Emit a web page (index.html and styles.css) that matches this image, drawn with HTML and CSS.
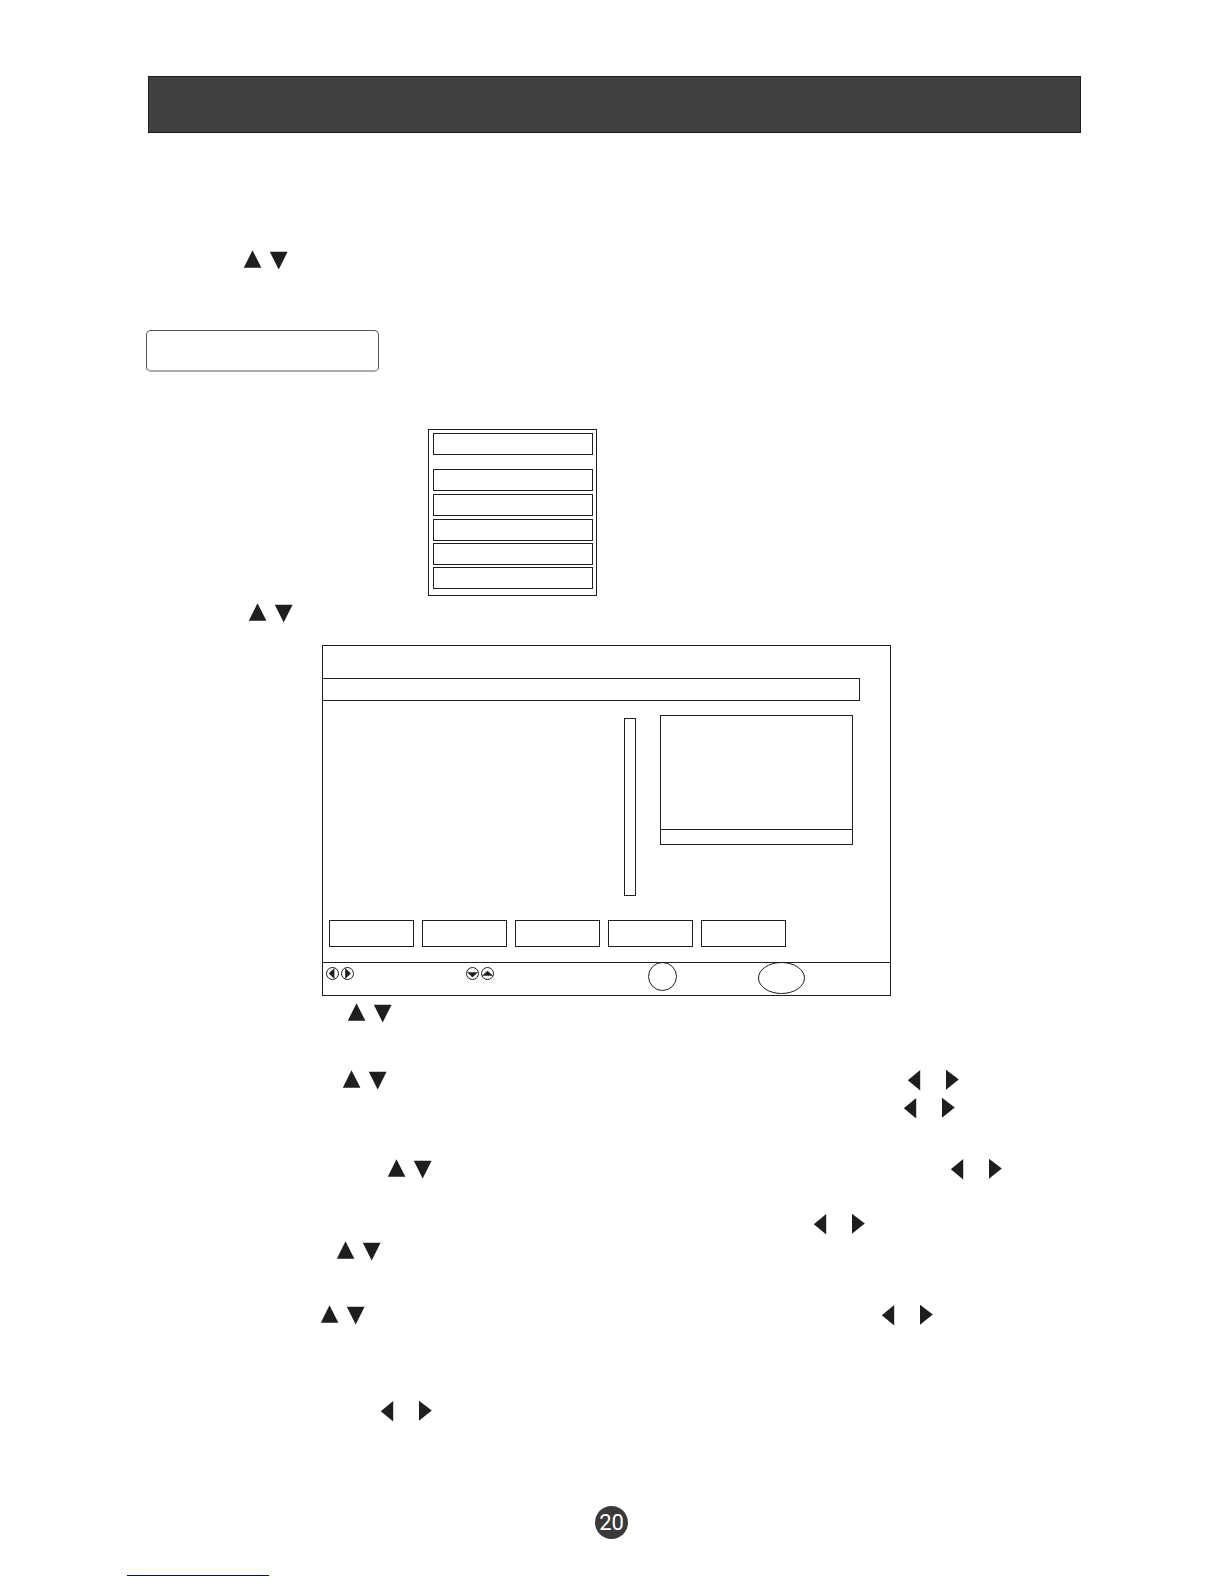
FILE: index.html
```html
<!DOCTYPE html>
<html lang="en">
<head>
<meta charset="utf-8">
<title>20</title>
<link rel="stylesheet" href="styles.css">
</head>
<body>
    <!-- shared arrow shapes -->
    <svg class="defs">
        <symbol id="updown" viewBox="0 0 44 20">
            <path d="M8.5 0.2L17.4 17.8H-0.2z M25.8 1.8H43.6L34.7 19.4z" />
        </symbol>
        <symbol id="leftright" viewBox="0 0 51 20">
            <path d="M-0.2 10.2L12.2 0V20.4z M38 -0.2V19.8L50.8 9.6z" />
        </symbol>
    </svg>
    <main class="page">
        <header class="banner"></header>

        <div class="line line-intro"><svg class="updown"><use href="#updown" /></svg></div>

        <div class="section-title"></div>

        <ul class="menu">
            <li class="menu-head"></li>
            <li></li>
            <li></li>
            <li></li>
            <li></li>
            <li></li>
        </ul>

        <div class="line line-select"><svg class="updown"><use href="#updown" /></svg></div>

        <section class="screen">
            <div class="screen-bar"></div>
            <div class="screen-body">
                <div class="list"></div>
                <div class="scrollbar"></div>
                <div class="preview">
                    <div class="preview-caption"></div>
                </div>
            </div>
            <div class="actions">
                <button type="button"></button>
                <button type="button"></button>
                <button type="button"></button>
                <button type="button"></button>
                <button type="button"></button>
            </div>
            <footer class="keys">
                <div class="key-pair">
                    <svg class="key" viewBox="0 0 13 13"><circle cx="6.5" cy="6.5" r="6" /><path d="M2.8 6.5L8.4 1V12z" /></svg>
                    <svg class="key" viewBox="0 0 13 13"><circle cx="6.5" cy="6.5" r="6" /><path d="M4.2 1V12L9.8 6.5z" /></svg>
                </div>
                <div class="key-pair key-pair-vertical">
                    <svg class="key" viewBox="0 0 13 13"><circle cx="6.5" cy="6.5" r="6" /><path d="M0.9 5.2H12.1L6.5 10.2z" /></svg>
                    <svg class="key" viewBox="0 0 13 13"><circle cx="6.5" cy="6.5" r="6" /><path d="M0.9 8.8H12.1L6.5 3.8z" /></svg>
                </div>
                <svg class="key-ok" viewBox="0 0 29 30"><circle cx="14.5" cy="14.5" r="14" /></svg>
                <svg class="key-exit" viewBox="0 0 47 32"><ellipse cx="23.5" cy="16" rx="23" ry="15.5" /></svg>
            </footer>
        </section>

        <div class="line line-a"><svg class="updown"><use href="#updown" /></svg></div>
        <div class="line line-b"><svg class="updown"><use href="#updown" /></svg><svg class="leftright"><use href="#leftright" /></svg></div>
        <div class="line line-c"><svg class="leftright"><use href="#leftright" /></svg></div>
        <div class="line line-d"><svg class="updown"><use href="#updown" /></svg><svg class="leftright"><use href="#leftright" /></svg></div>
        <div class="line line-e"><svg class="leftright"><use href="#leftright" /></svg></div>
        <div class="line line-f"><svg class="updown"><use href="#updown" /></svg></div>
        <div class="line line-g"><svg class="updown"><use href="#updown" /></svg><svg class="leftright"><use href="#leftright" /></svg></div>
        <div class="line line-h"><svg class="leftright"><use href="#leftright" /></svg></div>

        <div class="page-number">20</div>
    </main>
    <a class="source-link" href="#"></a>
</body>
</html>
```

FILE: styles.css
```css
* {
    box-sizing: border-box;
}
body {
    margin: 0;
    background: #fff;
    color: #231f20;
    font-family: "Liberation Sans", Arial, sans-serif;
}
.defs {
    display: block;
    width: 0;
    height: 0;
}
.page {
    padding: 76px 143px 0 148px;
}
.banner {
    height: 57px;
    background: #404040;
    border: 1px solid #1c1c1c;
}

/* instruction lines */
.line {
    display: flex;
    height: 20px;
}
.line svg,
.line use,
symbol {
    overflow: visible;
}
.line svg {
    flex: none;
    height: 20px;
    fill: #1f1d1e;
}
.updown {
    width: 44px;
}
.leftright {
    width: 51px;
}
.line-intro {
    margin: 117px 0 60px 96px;
}
.line-select {
    margin: 7px 0 22px 101px;
}
.line-a {
    margin: 7px 0 47px 200px;
}
.line-b {
    margin: 0 0 8px 195px;
    gap: 521px;
}
.line-c {
    margin: 0 0 41px 756px;
}
.line-d {
    margin: 0 0 35px 240px;
    gap: 519px;
}
.line-e {
    margin: 0 0 7px 666px;
}
.line-f {
    margin: 0 0 44px 189px;
}
.line-g {
    margin: 0 0 76px 173px;
    gap: 517px;
}
.line-h {
    margin: 0 0 85px 233px;
}

.section-title {
    width: 233px;
    height: 42px;
    margin-left: -2px;
    border: 1px solid #555;
    border-bottom: 2px solid #aaa;
    border-radius: 5px;
}

/* menu */
.menu {
    width: 169px;
    margin: 57px 0 0 280px;
    padding: 3px 3px 6px 4px;
    border: 1px solid #1f1d1e;
    list-style: none;
    display: flex;
    flex-direction: column;
    gap: 2px;
}
.menu li {
    height: 22px;
    border: 1px solid #1f1d1e;
}
.menu li:nth-child(3),
.menu li:nth-child(4) {
    margin-top: 1px;
}
.menu .menu-head {
    margin-bottom: 12px;
}

/* tv screen */
.screen {
    max-width: 569px;
    margin-left: 174px;
    border: 1px solid #1f1d1e;
}
.screen-bar {
    height: 23px;
    margin: 32px 30px 0 0;
    border: 1px solid #1f1d1e;
    border-left: 0;
}
.screen-body {
    display: flex;
    align-items: flex-start;
    padding: 14px 37px 24px 0;
}
.list {
    flex: 1;
}
.scrollbar {
    width: 12px;
    height: 178px;
    margin: 3px 24px 0 0;
    border: 1px solid #1f1d1e;
}
.preview {
    display: flex;
    align-items: flex-end;
    width: 193px;
    height: 130px;
    border: 1px solid #1f1d1e;
}
.preview-caption {
    flex: 1;
    height: 15px;
    border-top: 1px solid #1f1d1e;
}
.actions {
    display: flex;
    gap: 8px;
    padding: 0 6px 15px;
}
.actions button {
    width: 85px;
    height: 27px;
    padding: 0;
    background: none;
    border: 1px solid #1f1d1e;
}
.keys {
    display: flex;
    align-items: flex-start;
    height: 33px;
    padding-left: 3px;
    border-top: 1px solid #1f1d1e;
}
.keys svg {
    flex: none;
    fill: none;
    stroke: #1f1d1e;
}
.keys .key path {
    fill: #1f1d1e;
    stroke: none;
}
.key-pair {
    display: flex;
    gap: 2px;
    padding-top: 4px;
}
.key {
    width: 13px;
    height: 13px;
}
.key-pair-vertical {
    margin-left: 112px;
}
.key-ok {
    width: 29px;
    height: 30px;
    margin: -1px 0 0 154px;
}
.key-exit {
    width: 47px;
    height: 32px;
    margin: -1px 0 0 81px;
}

.page-number {
    width: 33px;
    height: 33px;
    margin-left: 447px;
    border-radius: 50%;
    background: #3a3a3a;
    color: #fff;
    font-family: Roboto, "Liberation Sans", sans-serif;
    font-size: 22px;
    line-height: 33px;
    display: flex;
    justify-content: center;
}
.source-link {
    display: block;
    width: 142px;
    margin: 36px 0 0 127px;
    border-bottom: 1px solid #0000a8;
}
```
